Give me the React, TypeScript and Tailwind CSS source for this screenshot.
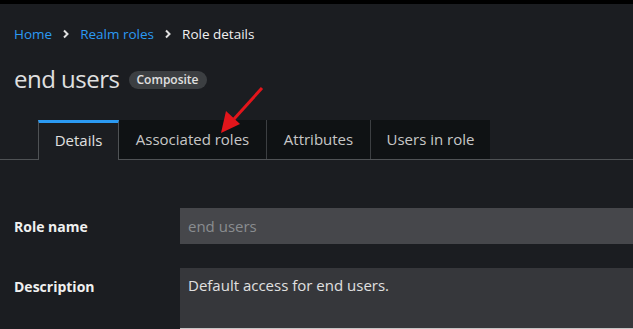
import React from "react";

const font = { fontFamily: '"Open Sans", "Liberation Sans", sans-serif' };

export default function App() {
  return (
    <div
      className="relative w-[633px] h-[329px] overflow-hidden bg-[#1b1d21] text-[#e0e0e0]"
      style={font}
    >
      <div className="h-1 bg-black" />
      <nav className="flex items-center pl-[14px] pt-[18px] h-[42px] text-[13.5px] leading-5">
        <span className="text-[#2b9af3]">Home</span>
        <svg className="mx-[10px]" width="8" height="10" viewBox="0 0 8 10">
          <path d="M2 1.5 L5.5 5 L2 8.5" stroke="#e0e0e0" strokeWidth="2" fill="none" />
        </svg>
        <span className="text-[#2b9af3]">Realm roles</span>
        <svg className="mx-[10px]" width="8" height="10" viewBox="0 0 8 10">
          <path d="M2 1.5 L5.5 5 L2 8.5" stroke="#e0e0e0" strokeWidth="2" fill="none" />
        </svg>
        <span className="text-[#f0f0f0]">Role details</span>
      </nav>
      <div className="flex items-center pl-[14px] mt-[17px] h-[32px]">
        <h1 className="text-[24px] leading-8 text-[#e0e0e0] tracking-[-0.5px]">end users</h1>
        <span className="ml-[9px] mt-[2px] rounded-full bg-[#3c3f42] px-[8px] h-[18px] flex items-center text-[12px] font-semibold text-[#e0e0e0]">
          Composite
        </span>
      </div>
      <div className="mt-[25px] flex border-b border-[#4f5255]">
        <div className="w-[38px]" />
        <div className="-mb-px h-[40px] w-[81px] pb-[3px] flex items-center justify-center border-t-[3px] border-t-[#2b9af3] border-x border-x-[#4f5255] bg-[#1b1d21] text-[15px] text-[#e0e0e0]">
          Details
        </div>
        <div className="h-[39px] w-[148px] flex items-center justify-center bg-[#0f1214] border-r border-[#3c3f42] text-[15px] text-[#c7c7c7]">
          Associated roles
        </div>
        <div className="h-[39px] w-[104px] flex items-center justify-center bg-[#0f1214] border-r border-[#3c3f42] text-[15px] text-[#c7c7c7]">
          Attributes
        </div>
        <div className="h-[39px] w-[119px] flex items-center justify-center bg-[#0f1214] text-[15px] text-[#c7c7c7]">
          Users in role
        </div>
      </div>
      <div className="mt-[48px] flex flex-col gap-[24px]">
        <div className="flex items-center">
          <label className="w-[180px] pl-[14px] text-[14px] font-bold text-[#f0f0f0]">Role name</label>
          <div className="flex-1 h-[36px] bg-[#46474b] flex items-center pl-[8px] text-[15px] text-[#8a8d90]">
            end users
          </div>
        </div>
        <div className="flex items-start">
          <label className="w-[180px] pl-[14px] pt-[8px] text-[14px] font-bold text-[#f0f0f0]">Description</label>
          <div className="flex-1 h-[61px] bg-[#36373b] border-b border-[#c7c7c7] pl-[8px] pt-[6px] text-[15px] text-[#e0e0e0]">
            Default access for end users.
          </div>
        </div>
      </div>
      <svg className="absolute left-0 top-0 pointer-events-none" width="633" height="329">
        <line x1="262" y1="88" x2="234" y2="119" stroke="#e3151b" strokeWidth="3" />
        <polygon points="221,133 226,111 240,124" fill="#e3151b" />
      </svg>
    </div>
  );
}
